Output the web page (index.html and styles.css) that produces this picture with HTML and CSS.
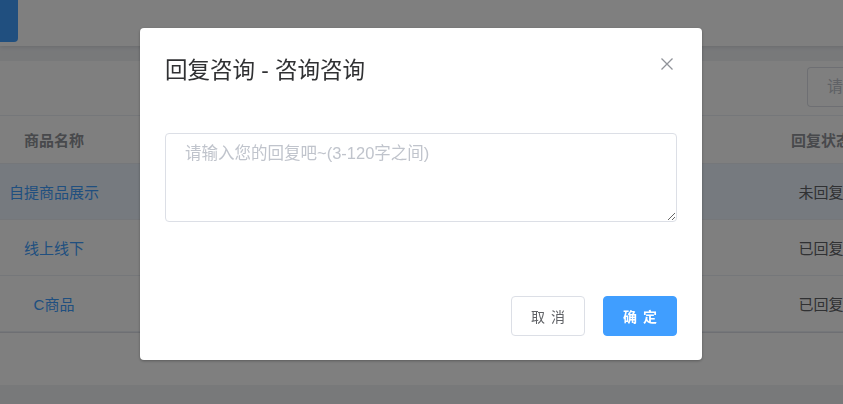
FILE: index.html
```html
<!DOCTYPE html>
<html lang="zh-CN">
<head>
<meta charset="utf-8">
<title>回复咨询</title>
<link rel="stylesheet" href="styles.css">
</head>
<body>
<div class="page">
  <header class="topbar"><div class="menu-btn"></div></header>
  <main class="content">
    <section class="card">
      <div class="toolbar"><div class="search">请输入商品名称</div></div>
      <div class="table">
        <div class="row head">
          <div class="cell c1">商品名称</div><div class="cell mid"></div><div class="cell c3">回复状态</div>
        </div>
        <div class="row current">
          <div class="cell c1 link">自提商品展示</div><div class="cell mid"></div><div class="cell c3">未回复</div>
        </div>
        <div class="row">
          <div class="cell c1 link">线上线下</div><div class="cell mid"></div><div class="cell c3">已回复</div>
        </div>
        <div class="row last">
          <div class="cell c1 link">C商品</div><div class="cell mid"></div><div class="cell c3">已回复</div>
        </div>
      </div>
    </section>
  </main>
</div>

<div class="mask"></div>

<div class="dialog-wrap">
  <div class="dialog">
    <div class="dialog-header">
      <span class="dialog-title">回复咨询 - 咨询咨询</span>
      <button class="close" type="button" aria-label="关闭">
        <svg width="14" height="14" viewBox="0 0 14 14"><path d="M1.5 1.5 L12.5 12.5 M12.5 1.5 L1.5 12.5" stroke="#909399" stroke-width="1.3" fill="none"/></svg>
      </button>
    </div>
    <div class="dialog-body">
      <textarea class="reply" placeholder="请输入您的回复吧~(3-120字之间)"></textarea>
    </div>
    <div class="dialog-footer">
      <button class="btn" type="button"><span>取消</span></button>
      <button class="btn primary" type="button"><span>确定</span></button>
    </div>
  </div>
</div>
</body>
</html>
```

FILE: styles.css
```css
html, body {
  margin: 0;
  padding: 0;
  width: 843px;
  height: 404px;
  overflow: hidden;
  font-family: "Liberation Sans", "Noto Sans CJK SC", sans-serif;
  background: #f0f2f5;
}

.page {
  width: 882px;
  height: 404px;
  display: flex;
  flex-direction: column;
  background: #f0f2f5;
}

.topbar {
  height: 46px;
  flex: none;
  background: #fff;
  box-shadow: 0 1px 4px rgba(0, 21, 41, 0.12);
  position: relative;
  z-index: 1;
}

.menu-btn {
  width: 18px;
  height: 42px;
  background: #409eff;
  border-bottom-right-radius: 4px;
}

.content {
  padding-top: 15px;
}

.card {
  background: #fff;
  padding-bottom: 52px;
}

.toolbar {
  display: flex;
  justify-content: flex-end;
  padding: 6px 0 8px;
  border-bottom: 1px solid #ebeef5;
}

.search {
  width: 75px;
  height: 40px;
  box-sizing: border-box;
  border: 1px solid #dcdfe6;
  border-right: none;
  border-radius: 4px 0 0 4px;
  padding-left: 19px;
  font-size: 16px;
  line-height: 38px;
  color: #c0c4cc;
  white-space: nowrap;
  overflow: hidden;
}

.table {
  border-bottom: 1px solid #dcdfe6;
}

.row {
  display: grid;
  grid-template-columns: 108px 1fr 122px;
  height: 56px;
  box-sizing: border-box;
  border-bottom: 1px solid #ebeef5;
  font-size: 15px;
  color: #606266;
}

.row.head {
  height: 48px;
  font-weight: bold;
  color: #909399;
}

.row.current {
  background: #ecf5ff;
}

.cell {
  display: flex;
  align-items: center;
  justify-content: center;
  white-space: nowrap;
}

.cell.link {
  color: #409eff;
}

/* overlay */
.mask {
  position: fixed;
  inset: 0;
  z-index: 10;
  background: rgba(0, 0, 0, 0.5);
}

.dialog-wrap {
  position: fixed;
  inset: 0;
  z-index: 11;
  display: flex;
  justify-content: center;
  align-items: flex-start;
  padding: 28px 1px 0 0;
}

.dialog {
  width: 562px;
  box-sizing: border-box;
  background: #fff;
  border-radius: 4px;
  box-shadow: 0 1px 3px rgba(0, 0, 0, 0.3);
  padding: 25px 25px 24px;
}

.dialog-header {
  display: flex;
  justify-content: space-between;
  align-items: flex-start;
}

.dialog-title {
  font-size: 22.5px;
  line-height: 34px;
  color: #303133;
  padding-top: 1px;
}

.close {
  border: none;
  background: none;
  padding: 0;
  margin: 4px 3px 0 0;
  width: 14px;
  height: 14px;
  display: block;
  cursor: pointer;
}

.close svg {
  display: block;
}

.dialog-body {
  padding-top: 45px;
}

.reply {
  display: block;
  width: 100%;
  height: 89px;
  box-sizing: border-box;
  margin: 0;
  border: 1px solid #dcdfe6;
  border-radius: 4px;
  padding: 7px 19px 5px;
  font-family: "Liberation Sans", "Noto Sans CJK SC", sans-serif;
  font-size: 16.5px;
  line-height: 1.5;
  color: #606266;
  outline: none;
  resize: vertical;
}

.reply::placeholder {
  color: #c0c4cc;
}

.dialog-footer {
  display: flex;
  justify-content: flex-end;
  gap: 18px;
  margin-top: 74px;
}

.btn {
  width: 74px;
  height: 40px;
  box-sizing: border-box;
  border: 1px solid #dcdfe6;
  border-radius: 4px;
  background: #fff;
  color: #606266;
  font-family: "Liberation Sans", "Noto Sans CJK SC", sans-serif;
  font-size: 14px;
  padding: 0;
  display: flex;
  align-items: center;
  justify-content: center;
  cursor: pointer;
}

.btn span {
  letter-spacing: 6px;
  margin-right: -6px;
}

.btn.primary {
  background: #409eff;
  border-color: #409eff;
  color: #fff;
  font-weight: bold;
}
```
